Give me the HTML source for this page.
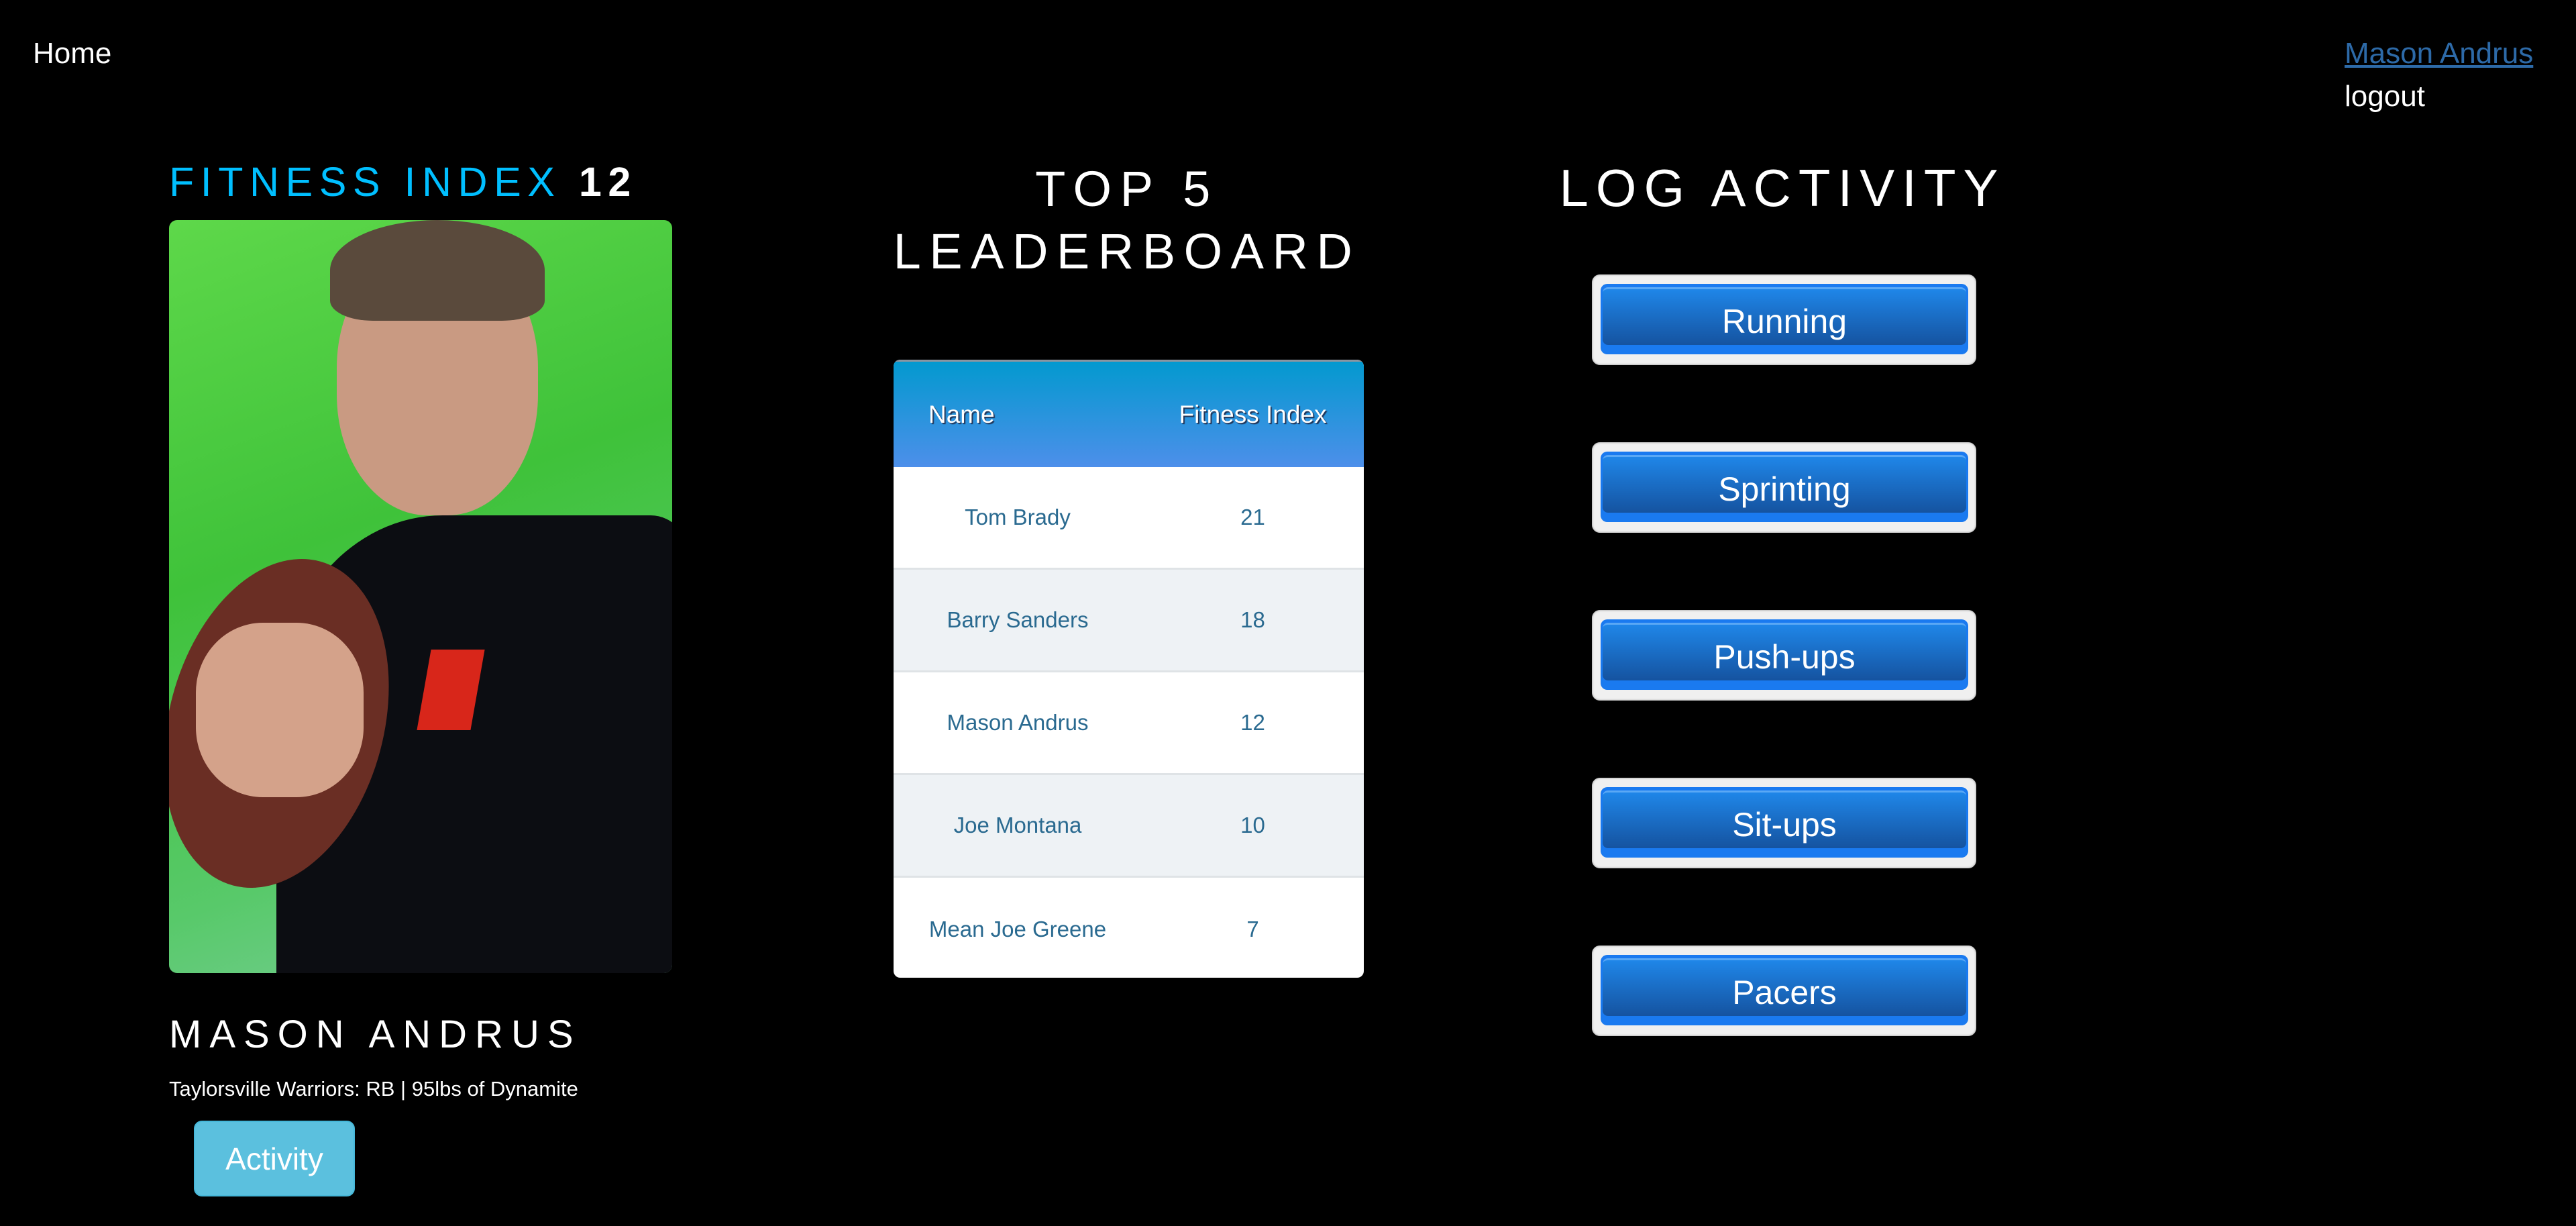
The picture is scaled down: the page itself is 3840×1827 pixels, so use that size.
<!DOCTYPE html>
<html><head><meta charset="utf-8"><style>
*{margin:0;padding:0;box-sizing:border-box}
body{width:3840px;height:1827px;background:#000;font-family:"Liberation Sans",sans-serif;color:#fff;position:relative;overflow:hidden}
.a{position:absolute;white-space:nowrap}
.photo{position:absolute;left:252px;top:328px;width:750px;height:1122px;border-radius:12px;overflow:hidden;background:linear-gradient(160deg,#5ed84a 0%,#3fc23a 40%,#58c96a 75%,#7fcfa0 100%)}
.tbl{position:absolute;left:1332px;top:536px;width:701px;height:921px;background:#fff;border-radius:10px;overflow:hidden}
.hd{height:160px;background:linear-gradient(#0399cf,#4d8fea);display:flex;align-items:center;font-size:37px;text-shadow:2px 2px 1px #235;border-top:3px solid #8a95a0}
.row{height:153px;display:flex;align-items:center;color:#2a6a90;font-size:33px;border-bottom:3px solid #dfe3e6}
.row:nth-child(odd){background:#eef2f5}
.c1{width:370px;text-align:center}.c2{width:331px;text-align:center}
.btn{position:absolute;left:2373px;width:573px;height:135px;background:#f0f0f0;border-radius:12px;box-shadow:0 0 3px #888 inset}
.btn div{position:absolute;left:13px;top:14px;right:12px;bottom:16px;border-radius:10px;background:#1a7af0;}
.btn span{position:absolute;left:3px;right:3px;top:5px;bottom:14px;border-radius:8px;background:linear-gradient(#1f86e8,#1553a0);border-top:3px solid #5aa8f5;display:flex;align-items:center;justify-content:center;font-size:50px;color:#fff;padding-top:12px}
</style></head><body>
<div class="a" style="left:49px;top:55px;font-size:44px">Home</div>
<div class="a" style="left:3495px;top:55px;font-size:44px;color:#2d6aa8;text-decoration:underline">Mason Andrus </div>
<div class="a" style="left:3495px;top:119px;font-size:44px">logout</div>

<div class="a" style="left:252px;top:236px;font-size:61px;letter-spacing:9.5px;color:#00bfff">FITNESS INDEX <b style="color:#fff">12</b></div>
<div class="photo">
<div style="position:absolute;left:250px;top:40px;width:300px;height:400px;border-radius:45%;background:#c99a82"></div>
<div style="position:absolute;left:240px;top:0;width:320px;height:150px;border-radius:50% 50% 20% 20%;background:#5a4a3c"></div>
<div style="position:absolute;left:160px;top:440px;width:620px;height:720px;border-radius:40% 10% 0 0;background:#0c0d12"></div>
<div style="position:absolute;left:0;top:500px;width:320px;height:500px;border-radius:50%;background:#6a2e24;transform:rotate(15deg)"></div>
<div style="position:absolute;left:40px;top:600px;width:250px;height:260px;border-radius:40%;background:#d4a28a"></div>
<div style="position:absolute;left:380px;top:640px;width:80px;height:120px;background:#d8261a;transform:skew(-10deg)"></div>
</div>
<div class="a" style="left:252px;top:1508px;font-size:58px;letter-spacing:12px">MASON ANDRUS</div>
<div class="a" style="left:252px;top:1605px;font-size:31px">Taylorsville Warriors: RB | 95lbs of Dynamite</div>
<div class="a" style="left:289px;top:1670px;width:240px;height:113px;background:#5bc0de;border:2px solid #46b8da;border-radius:12px;font-size:46px;display:flex;align-items:center;justify-content:center">Activity</div>

<div class="a" style="left:1180px;width:1000px;top:235px;text-align:center;font-size:74px;letter-spacing:12.5px;line-height:93px">TOP 5<br>LEADERBOARD</div>

<div class="tbl">
<div class="hd"><div style="width:370px;padding-left:52px">Name</div><div class="c2">Fitness Index</div></div>
<div class="row"><div class="c1">Tom Brady</div><div class="c2">21</div></div>
<div class="row"><div class="c1">Barry Sanders</div><div class="c2">18</div></div>
<div class="row"><div class="c1">Mason Andrus</div><div class="c2">12</div></div>
<div class="row"><div class="c1">Joe Montana</div><div class="c2">10</div></div>
<div class="row" style="border:none"><div class="c1">Mean Joe Greene</div><div class="c2">7</div></div>
</div>

<div class="a" style="left:2157px;width:1000px;top:235px;text-align:center;font-size:78px;letter-spacing:11px">LOG ACTIVITY</div>
<div class="btn" style="top:409px"><div><span>Running</span></div></div>
<div class="btn" style="top:659px"><div><span>Sprinting</span></div></div>
<div class="btn" style="top:909px"><div><span>Push-ups</span></div></div>
<div class="btn" style="top:1159px"><div><span>Sit-ups</span></div></div>
<div class="btn" style="top:1409px"><div><span>Pacers</span></div></div>
</body></html>
